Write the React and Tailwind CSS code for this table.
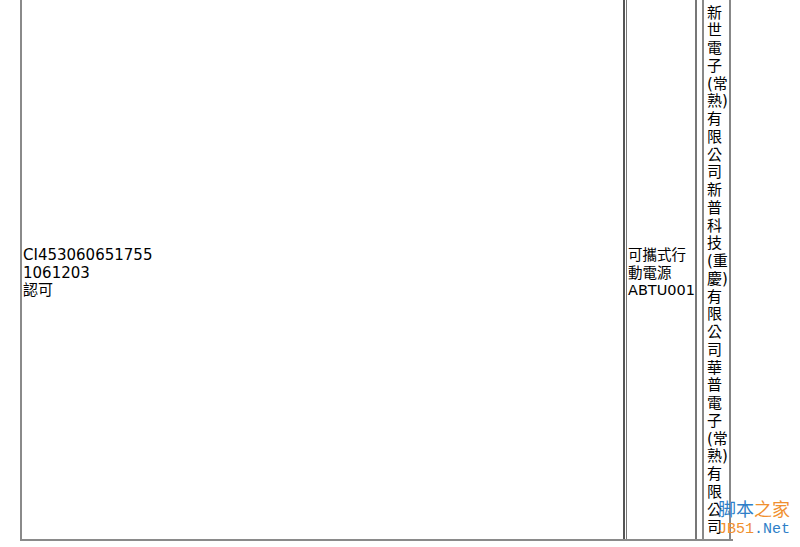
const LINES = [
  '新', '世', '電', '子', '(常', '熟)', '有', '限', '公', '司',
  '新', '普', '科', '技', '(重', '慶)', '有', '限', '公', '司',
  '華', '普', '電', '子', '(常', '熟)', '有', '限', '公', '司',
];

const FONT = { fontFamily: '"DejaVu Sans", Verdana, "Noto Sans CJK TC", sans-serif' };

export default function App() {
  return (
    <div className="relative h-[547px] w-[800px] overflow-hidden bg-white text-[15px] leading-[17.75px] text-black" style={FONT}>
      <div className="ml-[20px] flex h-[541px] w-[713px] border-b-2 border-l-2 border-[#8a8a8a]">
        <div className="flex w-[603px] items-center border-r-2 border-[#555] pt-[8px] pl-[1px]">
          <div>
            <div>CI453060651755</div>
            <div>1061203</div>
            <div>認可</div>
          </div>
        </div>
        <div className="ml-[1px] flex w-[71px] items-center border-l border-r-2 border-[#777] pt-[8px] pl-[1px] text-[14.5px]">
          <div>
            <div>可攜式行</div>
            <div>動電源</div>
            <div>ABTU001</div>
          </div>
        </div>
        <div className="ml-[5px] flex w-[29px] flex-col justify-end border-l-2 border-r-2 border-[#888] pb-[2px] pl-[3px]">
          {LINES.map((t, i) => (
            <div key={i} className="whitespace-nowrap">{t}</div>
          ))}
        </div>
      </div>
      <div className="absolute left-[718px] top-[497px] text-[18px] leading-[22px]" style={{ fontFamily: '"Noto Sans CJK SC", sans-serif' }}>
        <span className="text-[#2f7fc8]">脚本</span>
        <span className="text-[#f0902f]">之家</span>
      </div>
      <div className="absolute left-[718px] top-[520px] text-[15px] leading-[20px]" style={{ fontFamily: '"Liberation Mono", monospace' }}>
        <span className="text-[#f0902f]">JB51</span>
        <span className="text-[#2f7fc8]">.Net</span>
      </div>
    </div>
  );
}
